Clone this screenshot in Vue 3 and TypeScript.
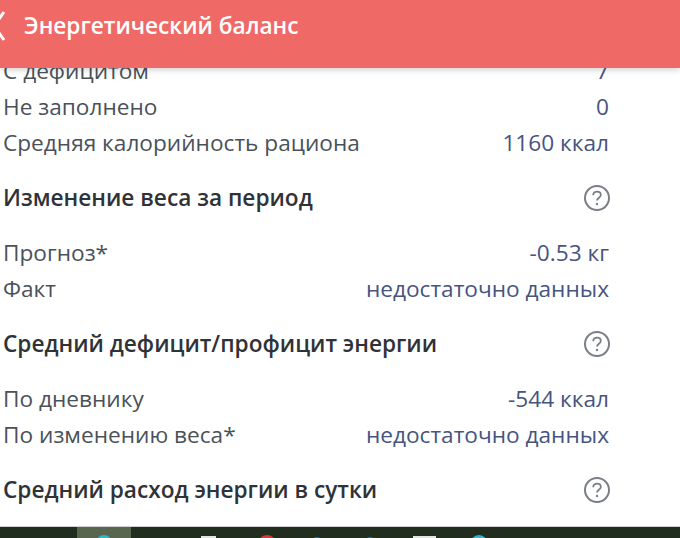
<script setup lang="ts">
interface Row { label: string; value: string }
interface Section { title?: string; rows: Row[]; help?: boolean }
const sections: Section[] = [
  { rows: [
    { label: 'С дефицитом', value: '7' },
    { label: 'Не заполнено', value: '0' },
    { label: 'Средняя калорийность рациона', value: '1160 ккал' },
  ] },
  { title: 'Изменение веса за период', help: true, rows: [
    { label: 'Прогноз*', value: '-0.53 кг' },
    { label: 'Факт', value: 'недостаточно данных' },
  ] },
  { title: 'Средний дефицит/профицит энергии', help: true, rows: [
    { label: 'По дневнику', value: '-544 ккал' },
    { label: 'По изменению веса*', value: 'недостаточно данных' },
  ] },
  { title: 'Средний расход энергии в сутки', help: true, rows: [] },
]
</script>

<template>
  <div class="page">
    <header class="bar">
      <svg class="back" width="12" height="30" viewBox="0 0 12 30" aria-hidden="true">
        <path d="M4 1 L-6 15 L4 29" fill="none" stroke="#fff" stroke-width="3" />
      </svg>
      <h1 class="title">Энергетический баланс</h1>
    </header>
    <main class="content">
      <section v-for="(s, i) in sections" :key="i" class="section">
        <div v-if="s.title" class="head">
          <h2 class="head-text">{{ s.title }}</h2>
          <svg class="help" width="28" height="28" viewBox="0 0 28 28" aria-hidden="true">
            <circle cx="14" cy="14" r="12" fill="none" stroke="#7a7f85" stroke-width="2" />
            <path d="M10.2 11.2 C10.2 8.8 12 7.6 14 7.6 C16.2 7.6 17.8 9 17.8 10.9 C17.8 13.6 14 13.8 14 16.6" fill="none" stroke="#7a7f85" stroke-width="1.8" />
            <circle cx="14" cy="20" r="1.2" fill="#7a7f85" />
          </svg>
        </div>
        <div v-for="r in s.rows" :key="r.label" class="row">
          <span class="label">{{ r.label }}</span>
          <span class="value">{{ r.value }}</span>
        </div>
      </section>
    </main>
    <footer class="taskbar">
      <div class="task active"><span class="dot cyan"></span></div>
      <span class="tile tile-a"></span>
      <span class="dot red"></span>
      <span class="dot blue blue-a"></span>
      <span class="dot blue blue-b"></span>
      <span class="tile tile-b"></span>
      <span class="dot cyan cyan-b"></span>
    </footer>
  </div>
</template>

<style>
html, body { margin: 0; background: #fff; }
</style>

<style scoped>
.page {
  width: 680px;
  height: 538px;
  display: flex;
  flex-direction: column;
  overflow: hidden;
  font-family: "Open Sans", "Liberation Sans", sans-serif;
  background: #fff;
}
.bar {
  position: relative;
  z-index: 2;
  flex: 0 0 68px;
  height: 68px;
  display: flex;
  align-items: center;
  background: #ef6a66;
  box-shadow: 0 2px 6px rgba(0, 0, 0, 0.18);
}
.back { flex: none; margin-right: 12px; margin-top: -16px; }
.title {
  margin: -16px 0 0;
  font-size: 22.65px;
  font-weight: 600;
  color: #fff;
  line-height: 28px;
}
.content {
  flex: 1;
  min-height: 0;
  overflow: hidden;
  padding: 0 71px 0 3px;
  margin-top: -15px;
}
.row {
  display: flex;
  justify-content: space-between;
  height: 36px;
  line-height: 36px;
  font-size: 22.65px;
}
.label { color: #4a5159; }
.value { color: #475480; }
.head {
  display: flex;
  justify-content: space-between;
  align-items: center;
  height: 36px;
  margin: 19px 0 19px;
}
.head-text {
  margin: -2px 0 0;
  font-size: 22.65px;
  font-weight: 600;
  color: #2f3338;
}
.help { flex: none; margin-right: -2px; }
.taskbar {
  position: relative;
  flex: 0 0 12px;
  height: 12px;
  background: #212d1e;
  border-top: 1px solid #cfd2cc;
  box-sizing: border-box;
  overflow: hidden;
  display: flex;
}
.task.active {
  flex: none;
  width: 54px;
  margin-left: 77px;
  background: #59664f;
  display: flex;
  justify-content: center;
  padding-top: 8px;
  box-sizing: border-box;
}
.dot { display: block; width: 18px; height: 18px; border-radius: 50%; flex: none; }
.cyan { background: #2bb7cf; }
.red { background: #d43a3a; width: 20px; height: 20px; margin: 8px 0 0 41px; }
.blue { background: #2d6fb0; width: 8px; height: 8px; }
.blue-a { margin: 10px 0 0 36px; }
.blue-b { margin: 10px 0 0 45px; }
.tile { display: block; background: #e2e4e0; flex: none; height: 10px; margin-top: 9px; }
.tile-a { width: 15px; margin-left: 70px; }
.tile-b { width: 23px; margin-left: 39px; }
.cyan-b { margin: 8px 0 0 34px; }
</style>
